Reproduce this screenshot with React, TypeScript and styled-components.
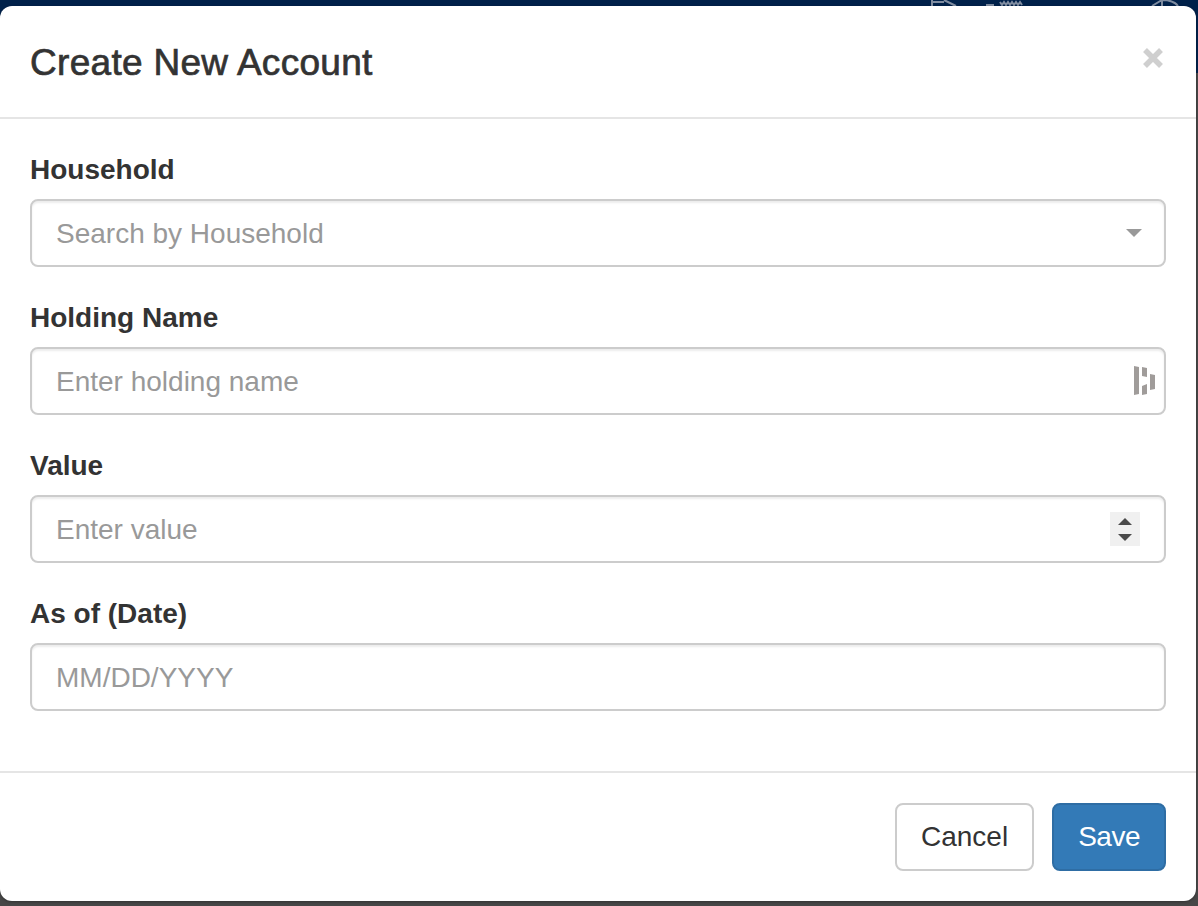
import React from 'react';
import styled, { createGlobalStyle } from 'styled-components';

const GlobalStyle = createGlobalStyle`
  html, body {
    margin: 0;
    padding: 0;
    height: 100%;
    background: #454545;
  }
  * {
    box-sizing: border-box;
  }
`;

const Page = styled.div`
  position: relative;
  width: 1198px;
  height: 906px;
  overflow: hidden;
  background: #474747;
  font-family: 'Liberation Sans', Arial, sans-serif;
  color: #333;
`;

const NavBackdrop = styled.div`
  height: 73px;
  background: #00214a;
  display: flex;
  justify-content: flex-end;
  color: #7f8ca0;
`;

const NavIcons = styled.svg`
  width: 298px;
  height: 73px;
  flex: none;
`;

const Modal = styled.div`
  position: absolute;
  top: 6px;
  left: 0;
  width: 1196px;
  height: 895px;
  display: flex;
  flex-direction: column;
  background: #fff;
  border-radius: 12px;
  box-shadow: 0 1px 3px rgba(0, 0, 0, 0.3);
`;

const Header = styled.div`
  height: 113px;
  flex: none;
  display: flex;
  align-items: center;
  justify-content: space-between;
  padding: 0 32px 0 30px;
  border-bottom: 2px solid #e5e5e5;
`;

const Title = styled.h4`
  margin: 2px 0 0;
  font-size: 37px;
  font-weight: 500;
  letter-spacing: 0.3px;
  line-height: 50px;
  color: #333;
  -webkit-text-stroke: 0.7px #333;
`;

const CloseIcon = styled.svg`
  width: 22px;
  height: 22px;
  color: #cfcfcf;
  margin-top: -8px;
`;

const Body = styled.div`
  flex: 1;
  padding: 31px 30px 0;
`;

const FormGroup = styled.div`
  margin-bottom: 31px;
`;

const Label = styled.label`
  display: block;
  font-size: 28px;
  font-weight: 700;
  line-height: 40px;
  margin-bottom: 9px;
  color: #333;
`;

const InputWrap = styled.div`
  position: relative;
  height: 68px;
`;

const Input = styled.input`
  display: block;
  width: 100%;
  height: 68px;
  padding: 2px 24px 0;
  border: 2px solid #ccc;
  border-radius: 8px;
  background: #fff;
  outline: none;
  font-family: 'Liberation Sans', Arial, sans-serif;
  font-size: 28px;
  color: #333;
  box-shadow: inset 0 2px 2px rgba(0, 0, 0, 0.075);

  &::placeholder {
    color: #999;
    opacity: 1;
  }
`;

const Caret = styled.span`
  position: absolute;
  top: 30px;
  right: 24px;
  width: 0;
  height: 0;
  border-left: 8px solid transparent;
  border-right: 8px solid transparent;
  border-top: 8px solid #999;
`;

const PasswordIcon = styled.svg`
  position: absolute;
  top: 19px;
  right: 10px;
  width: 22px;
  height: 30px;
  color: #a09c9a;
`;

const Spinner = styled.div`
  position: absolute;
  top: 17px;
  right: 26px;
  width: 30px;
  height: 34px;
  background: #f0f0f0;
  display: flex;
  flex-direction: column;
  align-items: center;
  justify-content: center;
  gap: 9px;
`;

const SpinArrow = styled.span<{ $up?: boolean }>`
  width: 0;
  height: 0;
  border-left: 7px solid transparent;
  border-right: 7px solid transparent;
  ${(p) => (p.$up ? 'border-bottom: 7px solid #4a4a4a;' : 'border-top: 7px solid #4a4a4a;')}
`;

const Footer = styled.div`
  height: 130px;
  flex: none;
  display: flex;
  justify-content: flex-end;
  align-items: flex-start;
  gap: 18px;
  padding: 30px 30px 0;
  border-top: 2px solid #e5e5e5;
`;

const Button = styled.button<{ $primary?: boolean }>`
  height: 68px;
  padding: 0 24px;
  border-radius: 8px;
  border: 2px solid ${(p) => (p.$primary ? '#2e6da4' : '#ccc')};
  background: ${(p) => (p.$primary ? '#337ab7' : '#fff')};
  color: ${(p) => (p.$primary ? '#fff' : '#333')};
  font-family: 'Liberation Sans', Arial, sans-serif;
  font-size: 28px;
  letter-spacing: ${(p) => (p.$primary ? '-0.5px' : '0')};
`;

export default function App() {
  return (
    <Page>
      <GlobalStyle />
      <NavBackdrop>
        <NavIcons viewBox="0 0 298 73" fill="none" stroke="currentColor" strokeWidth="2">
          <path d="M32 6V0M32 2h12M38 2h3M44 0l12 6" />
          <path d="M86 5h8M100 2l2 3 2-3 2 3 2-3 2 3 2-3 2 3 2-3 2 3 2-3 2 3" />
          <path d="M252 6l10-6M262 0v6M262 0c8 0 13 2 16 6" />
        </NavIcons>
      </NavBackdrop>
      <Modal>
        <Header>
          <Title>Create New Account</Title>
          <CloseIcon viewBox="0 0 22 22">
            <path d="M3 3l16 16M19 3L3 19" stroke="currentColor" strokeWidth="5.5" fill="none" />
          </CloseIcon>
        </Header>
        <Body>
          <FormGroup>
            <Label>Household</Label>
            <InputWrap>
              <Input placeholder="Search by Household" />
              <Caret />
            </InputWrap>
          </FormGroup>
          <FormGroup>
            <Label>Holding Name</Label>
            <InputWrap>
              <Input placeholder="Enter holding name" />
              <PasswordIcon viewBox="0 0 22 30" fill="currentColor">
                <path d="M0 0l5 1v27l-5 1zM8 1l5 1v9l-5-1zM8 20l5-2v10l-5 1zM16 8l5 1v14l-5 1z" />
              </PasswordIcon>
            </InputWrap>
          </FormGroup>
          <FormGroup>
            <Label>Value</Label>
            <InputWrap>
              <Input placeholder="Enter value" />
              <Spinner>
                <SpinArrow $up />
                <SpinArrow />
              </Spinner>
            </InputWrap>
          </FormGroup>
          <FormGroup>
            <Label>As of (Date)</Label>
            <InputWrap>
              <Input placeholder="MM/DD/YYYY" />
            </InputWrap>
          </FormGroup>
        </Body>
        <Footer>
          <Button>Cancel</Button>
          <Button $primary>Save</Button>
        </Footer>
      </Modal>
    </Page>
  );
}
